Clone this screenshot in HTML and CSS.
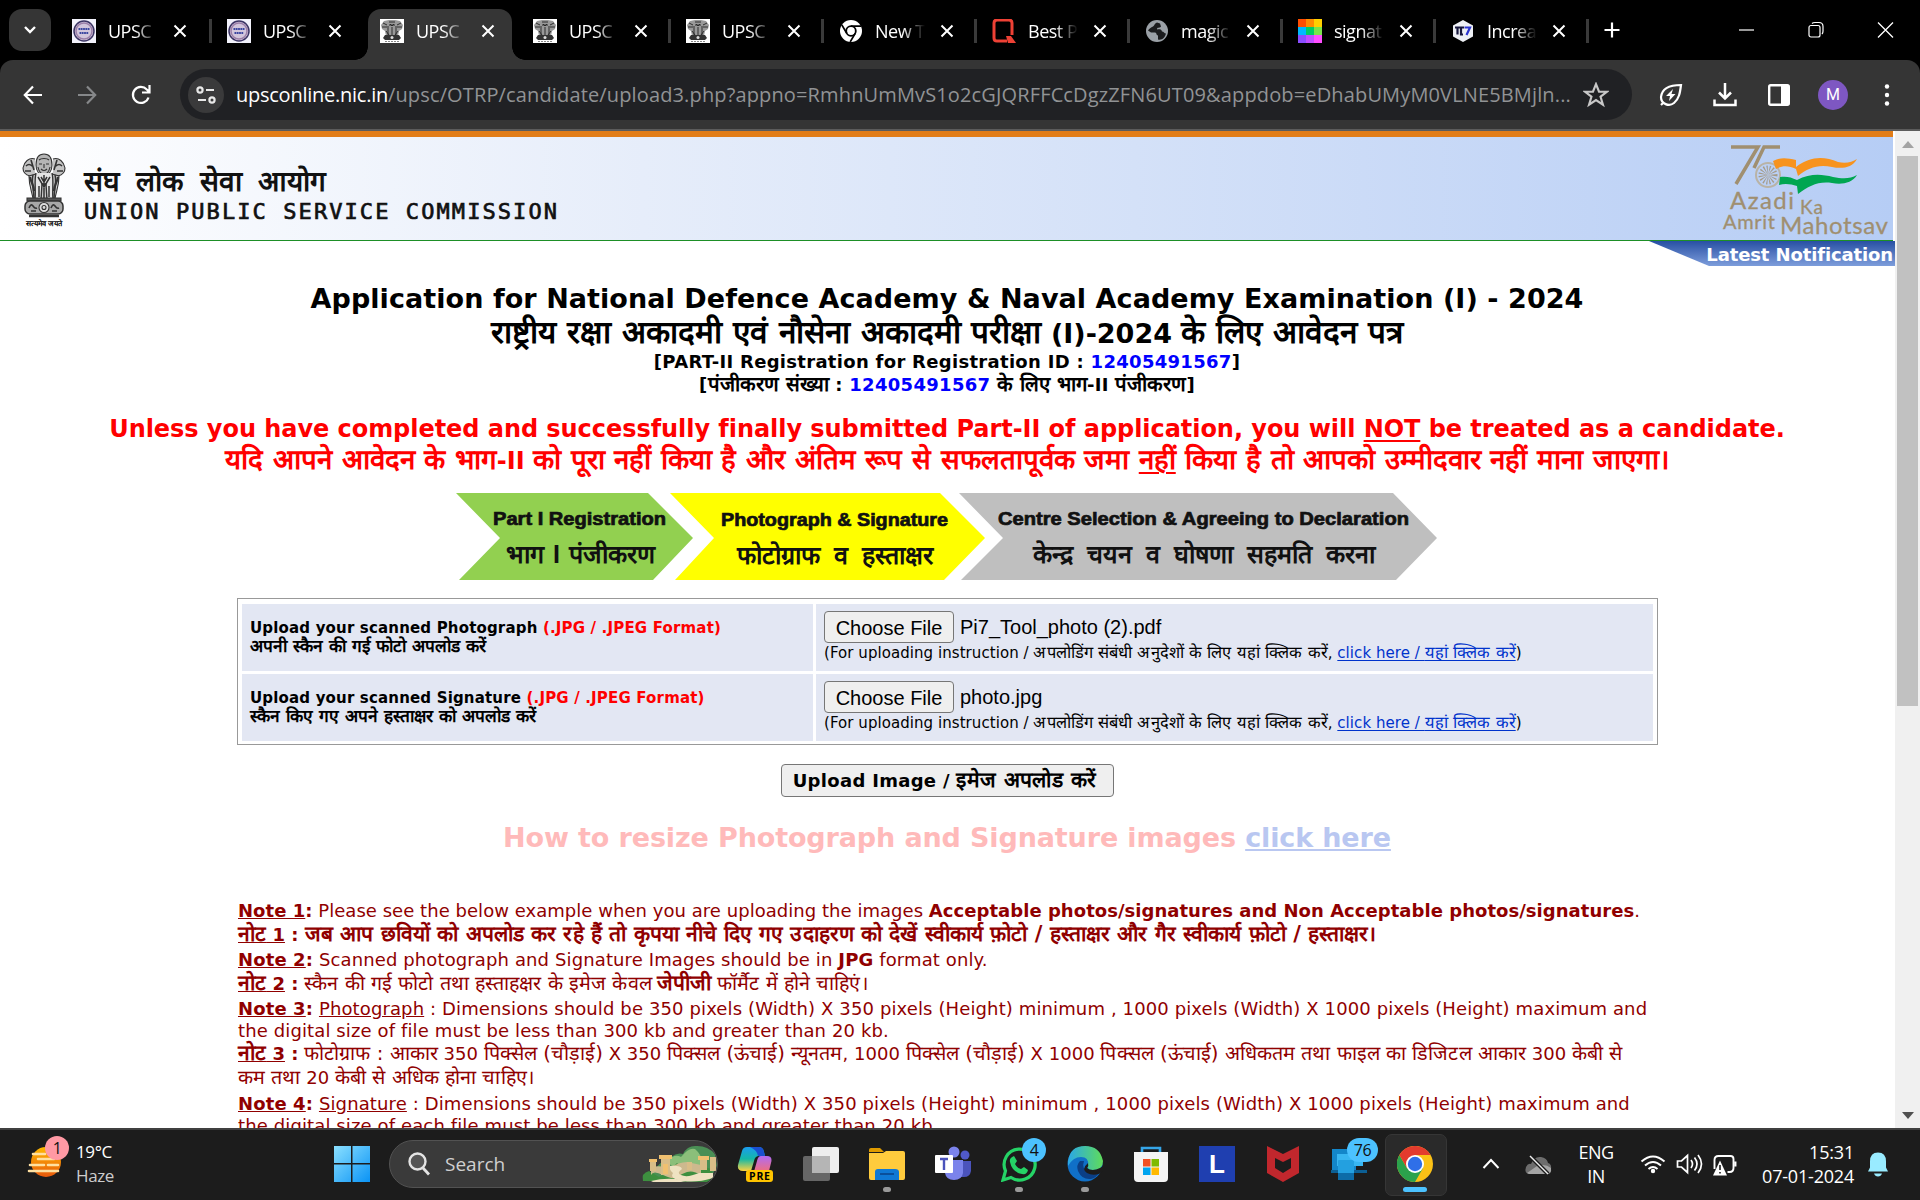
FILE: index.html
```html
<!DOCTYPE html>
<html lang="en">
<head>
<meta charset="utf-8">
<title>UPSC Online Application</title>
<link rel="stylesheet" href="styles.css">
</head>
<body>
<svg width="0" height="0" class="defs">
  <symbol id="emblem" viewBox="0 0 44 66">
    <g fill="none" stroke="#333" stroke-width="1.1">
      <path d="M14 12C14 4 17 1 22 1s8 3 8 11c0 6-3 10-8 10s-8-4-8-10Z" fill="#b5b5b5"/>
      <path d="M13 6C7 4 2 9 1 15c0 5 3 7 7 8l5-1M31 6c6-2 11 3 12 9 0 5-3 7-7 8l-5-1" fill="#c4c4c4"/>
      <path d="M17 7c2-2 8-2 10 0M17 11h3M24 11h3M19 16c2 2 4 2 6 0M22 11v4M16 14c1 5 3 7 6 7s5-2 6-7"/>
      <path d="M4 13c2-2 4-2 6 0M34 13c2-2 4-2 6 0M3 18h6M35 18h6M9 7l3 10M35 7l-3 10" stroke-width="1.6"/>
      <path d="M7 23C7 34 10 38 11 46h22c1-8 4-12 4-23l-7-2H14z" fill="#cfcfcf"/>
      <path d="M14 20c-2 8 0 14-1 27h6l1-16h4l1 16h6c-1-13 1-19-1-27" fill="#e4e4e4" stroke-width="1.4"/>
      <path d="M11 22c-2 8 1 14 1 24M33 22c2 8-1 14-1 24M16 24l3 5M28 24l-3 5M17 33v11M27 33v11M22 22v24M19 24l3 5 3-5M19 29l3 5 3-5" stroke-width="1.5"/>
      <path d="M8 24c1 6 4 8 4 14M36 24c-1 6-4 8-4 14" stroke-width="2.2"/>
      <path d="M5 45h34v3H5z" fill="#555"/>
      <rect x="3" y="48" width="38" height="13" rx="5" fill="#a8a8a8" stroke-width="1.5"/>
      <circle cx="22" cy="54.500" r="5" fill="#ddd"/><circle cx="22" cy="54.500" r="2"/>
      <path d="M7 55q2-5 4-2t4 2M29 55q2-5 4-2t4 2M9 58h5M30 58h5" stroke-width="1.6"/>
      <path d="M7 63h30" stroke-width="2.5"/>
    </g>
  </symbol>
  <symbol id="fav-emblem" viewBox="0 0 24 24">
    <path fill="#fff" d="M0 0h24v24H0z"/>
    <path fill="#999" d="M9 1h6l5 1 3 4-1 4-3 2-1 5H6l-1-5-3-2-1-4 3-4Z"/>
    <path fill="none" stroke="#222" stroke-width=".9" d="M9 3h6M9 6h6M3 4l4 2M21 4l-4 2M2 8h5M17 8h5M8 7v10M12 8v9M16 7v10M10 5l2 2 2-2M6 12l3 4M18 12l-3 4"/>
    <path fill="#333" d="M5 16h14l2 3-2 2H5l-2-2z"/><circle cx="12" cy="18.500" r="1.500" fill="#ddd"/>
    <path stroke="#888" d="M5 22.500h14" stroke-dasharray="2 1"/>
  </symbol>
  <symbol id="fav-round" viewBox="0 0 24 24">
    <path fill="#f2f2fb" d="M0 0h24v24H0z"/>
    <circle cx="12" cy="12" r="10" fill="#d2c6dc" stroke="#3b3464" stroke-width="1.500"/>
    <circle cx="12" cy="12" r="8" fill="none" stroke="#9b7fa8" stroke-width="1.500"/>
    <path stroke="#3a46a0" stroke-width="2.200" d="M6.500 10h11M7.500 14h9" stroke-dasharray="1.800 .5"/>
  </symbol>
  <symbol id="x" viewBox="0 0 14 14"><path d="M1.500 1.500l11 11M12.500 1.500l-11 11" stroke="#fff" stroke-width="2" fill="none"/></symbol>
</svg>

<header class="tabs">
  <button class="tab-menu"><svg width="14" height="10" viewBox="0 0 14 10"><path d="M2 2l5 5 5-5" fill="none" stroke="#fff" stroke-width="2.400"/></svg></button>
  <div class="tab lead"><svg class="fav"><use href="#fav-round"/></svg><span>UPSC</span><svg class="close"><use href="#x"/></svg></div>
  <div class="tab plain"><svg class="fav"><use href="#fav-round"/></svg><span>UPSC</span><svg class="close"><use href="#x"/></svg></div>
  <div class="tab active plain"><svg class="fav"><use href="#fav-emblem"/></svg><span>UPSC</span><svg class="close"><use href="#x"/></svg></div>
  <div class="tab"><svg class="fav"><use href="#fav-emblem"/></svg><span>UPSC</span><svg class="close"><use href="#x"/></svg></div>
  <div class="tab"><svg class="fav"><use href="#fav-emblem"/></svg><span>UPSC</span><svg class="close"><use href="#x"/></svg></div>
  <div class="tab"><svg class="fav" viewBox="0 0 24 24"><circle cx="12" cy="12" r="11" fill="#fff"/><circle cx="12" cy="12" r="4.800" fill="#fff" stroke="#000" stroke-width="1.800"/><path d="M12 7.200h10M7.800 14.400l-5-8.500M16.200 14.400l-5 8.500" stroke="#000" stroke-width="1.800"/></svg><span>New T</span><svg class="close"><use href="#x"/></svg></div>
  <div class="tab"><svg class="fav" viewBox="0 0 24 24"><path d="M15 22H5q-3 0-3-3V4q0-3 3-3h12q3 0 3 3v12" fill="none" stroke="#ee4135" stroke-width="3"/><path d="M14 17h5l5 7h-8z" fill="#ee4135"/></svg><span>Best P</span><svg class="close"><use href="#x"/></svg></div>
  <div class="tab"><svg class="fav" viewBox="0 0 24 24"><circle cx="12" cy="12" r="11" fill="#9aa0a6"/><path d="M12 3.500c-3 1-2 3-4 4-2 1-4 2-5 4l3 2h4c2 0 1 3 3 3v4c4 1 7-2 8-6-2 0-2-2-4-2-1-3-3-2-5-2 0-3 3-1 4-3l-1-3z" fill="#1b1c1e"/></svg><span>magic</span><svg class="close"><use href="#x"/></svg></div>
  <div class="tab"><svg class="fav" viewBox="0 0 24 24"><path fill="#ff4d00" d="M0 0h8v8H0z"/><path fill="#ff8c00" d="M8 0h8v8H8z"/><path fill="#ffd000" d="M16 0h8v8h-8z"/><path fill="#00b8ff" d="M0 8h8v8H0z"/><path fill="#00cc66" d="M8 8h8v8H8z"/><path fill="#7be34a" d="M16 8h8v8h-8z"/><path fill="#8a4dff" d="M0 16h8v8H0z"/><path fill="#c04dff" d="M8 16h8v8H8z"/><path fill="#ff4dff" d="M16 16h8v8h-8z"/></svg><span>signat</span><svg class="close"><use href="#x"/></svg></div>
  <div class="tab"><svg class="fav" viewBox="0 0 24 24"><path d="M12 1l10 5.500v11L12 23 2 17.500v-11z" fill="#eef0f5"/><path d="M4 8.500h9M6.500 8.500v7M10 8.500v7h2" stroke="#16163c" stroke-width="2.200" fill="none"/><path d="M13.500 8.500H19l-3.500 7.500" stroke="#2c35d0" stroke-width="2.200" fill="none"/></svg><span>Increa</span><svg class="close"><use href="#x"/></svg></div>
  <svg class="new-tab" viewBox="0 0 16 16"><path d="M8 .5v15M.5 8h15" stroke="#fff" stroke-width="2.200"/></svg>
  <div class="window-buttons">
    <svg width="18" height="18" viewBox="0 0 18 18"><path d="M1 9h15" stroke="#fff" stroke-width="1.200"/></svg>
    <svg width="18" height="18" viewBox="0 0 18 18"><rect x="2" y="4.500" width="11" height="11.500" rx="2" fill="none" stroke="#fff" stroke-width="1.200"/><path d="M5 2.500Q6 1.500 8 1.500h4q4 0 4 4V10q0 2-1 3" fill="none" stroke="#fff" stroke-width="1.200"/></svg>
    <svg width="18" height="18" viewBox="0 0 18 18"><path d="M2 1.500l15 15M17 1.500l-15 15" stroke="#fff" stroke-width="1.300"/></svg>
  </div>
</header>

<nav class="toolbar">
  <svg class="nav-icon" viewBox="0 0 20 20"><path d="M19 10H2M10 1.500L1.800 10l8.200 8.500" fill="none" stroke="#fff" stroke-width="2.200"/></svg>
  <svg class="nav-icon" viewBox="0 0 20 20"><path d="M1 10h17M10 1.500l8.200 8.500-8.200 8.500" fill="none" stroke="#86888a" stroke-width="2.200"/></svg>
  <svg class="nav-icon" viewBox="0 0 20 20"><path d="M17.500 12.500A8 8 0 1 1 15.800 4.500l2 2M18.500 0v7.500H11" fill="none" stroke="#fff" stroke-width="2.200"/></svg>
  <div class="omnibox">
    <span class="site"><svg width="20" height="18" viewBox="0 0 20 18"><g fill="none" stroke="#e8e8e8" stroke-width="2.200"><circle cx="4" cy="4" r="2.600"/><path d="M10 4h8M2 14h8"/><circle cx="16" cy="14" r="2.600"/></g></svg></span>
    <span class="url"><b>upsconline.nic.in</b>/upsc/OTRP/candidate/upload3.php?appno=RmhnUmMvS1o2cGJQRFFCcDgzZFN6UT09&amp;appdob=eDhabUMyM0VLNE5BMjln...</span>
    <svg class="star" viewBox="0 0 24 24"><path d="M12 2l2.800 7h7.200l-5.800 4.600 2.200 7.400L12 16.700 5.600 21l2.200-7.400L2 9h7.200z" fill="none" stroke="#c7c7c7" stroke-width="2"/></svg>
  </div>
  <svg class="tool" viewBox="0 0 24 24"><path d="M22 2C12 2 3 5 2 14c0 7 8 10 13 6 5-4 6-10 7-18ZM2 22l3-3" fill="none" stroke="#fff" stroke-width="2.200"/><path d="M14 6l-7 7h4l-1 5 6.500-7h-4z" fill="#fff"/></svg>
  <svg class="tool" viewBox="0 0 24 24"><path d="M12 0v15M6 9.500l6 6 6-6M1.500 16.500v5.500h21v-5.500" fill="none" stroke="#fff" stroke-width="2.500"/></svg>
  <svg class="tool" viewBox="0 0 24 24"><rect x="2.200" y="2.200" width="19.600" height="19.600" rx="1.500" fill="none" stroke="#fff" stroke-width="2.400"/><path d="M14 2h8v20h-8z" fill="#fff"/></svg>
  <span class="avatar">M</span>
  <svg class="dots" viewBox="0 0 6 22"><circle cx="3" cy="2.500" r="2.200" fill="#fff"/><circle cx="3" cy="11" r="2.200" fill="#fff"/><circle cx="3" cy="19.500" r="2.200" fill="#fff"/></svg>
</nav>

<div class="viewport">
<main class="page">
  <div class="banner">
    <div class="crest"><svg width="44" height="66"><use href="#emblem"/></svg><span>सत्यमेव जयते</span></div>
    <div class="org"><div class="org-hi">संघ लोक सेवा आयोग</div><div class="org-en">UNION PUBLIC SERVICE COMMISSION</div></div>
    <svg class="azadi" width="172" height="98" viewBox="1721 141 172 98">
      <path d="M1731 147h27l-22 37M1780 147h-16l-10 21" fill="none" stroke="#a08f70" stroke-width="3.500"/>
      <circle cx="1768" cy="175" r="12" fill="none" stroke="#b9b3a6" stroke-width="2"/>
      <circle cx="1768" cy="175" r="5" fill="none" stroke="#a59b88" stroke-width="9" stroke-dasharray=".8 1.200"/>
      <path d="M1773 161c8-4 14-3 23-1v7c14-11 28-11 42-5 8 2 14 0 19-3-5 9-15 10-25 8-14-3-24 1-34 9l-2-7c-7-3-13-4-20 0z" fill="#f7931e"/>
      <path d="M1780 177c6-1 11 0 17 3 13-7 25-6 36-3 10 2 17 2 24-2-5 8-15 10-25 8-14-2-23 3-34 11l-1-8c-6-2-12-3-18-1z" fill="#00a651"/>
      <g fill="#a08f70" font-family="Lato, sans-serif" stroke="#a08f70" stroke-width=".3">
        <text x="1730" y="209" font-size="24" textLength="64">Azadi</text>
        <text x="1800" y="214" font-size="19" textLength="23">Ka</text>
        <text x="1723" y="229" font-size="20" textLength="52">Amrit</text>
        <text x="1780" y="234" font-size="24" textLength="108">Mahotsav</text>
      </g>
    </svg>
  </div>
  <div class="latest"><span>Latest Notification</span></div>

  <section class="titles">
    <div class="t1">Application for National Defence Academy &amp; Naval Academy Examination (I) - 2024</div>
    <div class="t2"><span class="h">राष्ट्रीय रक्षा अकादमी एवं नौसेना अकादमी परीक्षा</span> (I)-2024 <span class="h">के लिए आवेदन पत्र</span></div>
    <div class="t3">[PART-II Registration for Registration ID : <em>12405491567</em>]</div>
    <div class="t3">[<span class="h">पंजीकरण संख्या</span> : <em>12405491567</em> <span class="h">के लिए भाग</span>-II <span class="h">पंजीकरण</span>]</div>
  </section>
  <section class="warning">
    <div class="w-en">Unless you have completed and successfully finally submitted Part-II of application, you will <u>NOT</u> be treated as a candidate.</div>
    <div class="w-hi"><span class="h">यदि आपने आवेदन के भाग</span>-II <span class="h">को पूरा नहीं किया है और अंतिम रूप से सफलतापूर्वक जमा <u>नहीं</u> किया है तो आपको उम्मीदवार नहीं माना जाएगा।</span></div>
  </section>

  <svg class="steps" width="982" height="87" viewBox="456 493 982 87">
    <path d="M456 493h192l45 45-40 42H459l41-42z" fill="#92d050"/>
    <path d="M670 493h270l45 45-41 42H675l39-42z" fill="#ff0"/>
    <path d="M959 493h434l44 45-41 42H961l42-42z" fill="#bfbfbf"/>
    <g font-family="'Liberation Sans', sans-serif" font-weight="bold" fill="#111">
      <g font-size="18" stroke="#111" stroke-width=".7">
        <text x="493" y="525" textLength="173" lengthAdjust="spacingAndGlyphs">Part I Registration</text>
        <text x="721" y="526" textLength="227" lengthAdjust="spacingAndGlyphs">Photograph &amp; Signature</text>
        <text x="998" y="525" textLength="411" lengthAdjust="spacingAndGlyphs">Centre Selection &amp; Agreeing to Declaration</text>
      </g>
      <g font-size="25">
        <text x="506" y="563" word-spacing="2">भाग I पंजीकरण</text>
        <text x="737" y="564" word-spacing="7">फोटोग्राफ व हस्ताक्षर</text>
        <text x="1033" y="563" word-spacing="7">केन्द्र चयन व घोषणा सहमति करना</text>
      </g>
    </g>
  </svg>

  <div class="upload">
    <div class="label"><div class="l-photo">Upload your scanned Photograph <i>(.JPG / .JPEG Format)</i></div><div><span class="h">अपनी स्कैन की गई फोटो अपलोड करें</span></div></div>
    <div class="field"><div class="file"><button>Choose File</button>Pi7_Tool_photo (2).pdf</div><div class="hint">(For uploading instruction / <span class="h">अपलोडिंग संबंधी अनुदेशों के लिए यहां क्लिक करें</span>, <a>click here / <span class="h">यहां क्लिक करें</span></a>)</div></div>
    <div class="label"><div class="l-photo">Upload your scanned Signature <i>(.JPG / .JPEG Format)</i></div><div><span class="h">स्कैन किए गए अपने हस्ताक्षर को अपलोड करें</span></div></div>
    <div class="field"><div class="file"><button>Choose File</button>photo.jpg</div><div class="hint">(For uploading instruction / <span class="h">अपलोडिंग संबंधी अनुदेशों के लिए यहां क्लिक करें</span>, <a>click here / <span class="h">यहां क्लिक करें</span></a>)</div></div>
  </div>
  <button class="submit">Upload Image / <span class="h">इमेज अपलोड करें</span></button>
  <div class="resize">How to resize Photograph and Signature images <a>click here</a></div>

  <section class="notes">
    <p><b><u>Note 1</u>:</b> Please see the below example when you are uploading the images <b>Acceptable photos/signatures and Non Acceptable photos/signatures</b>.</p>
    <p class="hi"><b><u><span class="h">नोट</span> 1</u> : <span class="h">जब आप छवियों को अपलोड कर रहे हैं तो कृपया नीचे दिए गए उदाहरण को देखें स्वीकार्य फ़ोटो / हस्ताक्षर और गैर स्वीकार्य फ़ोटो / हस्ताक्षर।</span></b></p>
    <p class="wide"><b><u>Note 2</u>:</b> Scanned photograph and Signature Images should be in <b>JPG</b> format only.</p>
    <p class="hi"><b><u><span class="h">नोट</span> 2</u> :</b> <span class="h">स्कैन की गई फोटो तथा हस्ताहक्षर के इमेज केवल</span> <b><span class="h">जेपीजी</span></b> <span class="h">फॉर्मैट में होने चाहिएं।</span></p>
    <p class="wide"><b><u>Note 3</u>:</b> <u>Photograph</u> : Dimensions should be 350 pixels (Width) X 350 pixels (Height) minimum , 1000 pixels (Width) X 1000 pixels (Height) maximum and<br>the digital size of file must be less than 300 kb and greater than 20 kb.</p>
    <p class="hi last"><b><u><span class="h">नोट</span> 3</u> :</b> <span class="h">फोटोग्राफ : आकार</span> 350 <span class="h">पिक्सेल (चौड़ाई)</span> X 350 <span class="h">पिक्सल (ऊंचाई) न्यूनतम</span>, 1000 <span class="h">पिक्सेल (चौड़ाई)</span> X 1000 <span class="h">पिक्सल (ऊंचाई) अधिकतम तथा फाइल का डिजिटल आकार</span> 300 <span class="h">केबी से</span><br><span class="h">कम तथा</span> 20 <span class="h">केबी से अधिक होना चाहिए।</span></p>
    <p class="wide"><b><u>Note 4</u>:</b> <u>Signature</u> : Dimensions should be 350 pixels (Width) X 350 pixels (Height) minimum , 1000 pixels (Width) X 1000 pixels (Height) maximum and<br>the digital size of each file must be less than 300 kb and greater than 20 kb.</p>
  </section>
</main>
<aside class="scrollbar">
  <svg width="12" height="7" viewBox="0 0 12 7"><path d="M6 0l6 7H0z" fill="#a3a3a3"/></svg>
  <div class="thumb"></div>
  <svg width="12" height="7" viewBox="0 0 12 7"><path d="M0 0h12L6 7z" fill="#505050"/></svg>
</aside>
</div>

<footer class="taskbar">
  <div class="weather">
    <svg width="40" height="40" viewBox="0 0 40 40"><defs><linearGradient id="sun" x2="0" y2="1"><stop stop-color="#ffb900"/><stop offset="1" stop-color="#e8590c"/></linearGradient></defs><circle cx="22" cy="22" r="15" fill="url(#sun)"/><path d="M9 14h12M14 19h16M6 25h14M24 25h10M5 31h29" stroke="#ffe0a0" stroke-width="2.600" stroke-linecap="round"/></svg>
    <span class="badge pink">1</span>
    <div><div>19°C</div><div class="dim">Haze</div></div>
  </div>
  <svg class="start" width="36" height="36" viewBox="0 0 36 36"><defs><linearGradient id="win" x2="1" y2="1"><stop stop-color="#8be0ff"/><stop offset="1" stop-color="#0a93f5"/></linearGradient></defs><path d="M0 0h17v17H0zM18.500 0H36v17H18.500zM0 18.500h17V36H0zM18.500 18.500H36V36H18.500z" fill="url(#win)"/></svg>
  <div class="search">
    <svg width="24" height="24" viewBox="0 0 24 24"><circle cx="10.500" cy="9.500" r="8" fill="#555" stroke="#e4e4e4" stroke-width="2.400"/><path d="M16 16l6 6.500" stroke="#e4e4e4" stroke-width="2.800"/></svg>
    <span>Search</span>
    <svg width="76" height="38" viewBox="0 0 76 38"><path d="M8 36Q14 18 30 12q6-5 12-3 4-8 12-8 12-1 20 8l2 12-8 15z" fill="#4a8f55"/><path d="M26 16q8-8 14-4 8-10 14-8 6 5 8 14-10 8-20 6-10 0-16-8z" fill="#8bbf7a"/><path d="M2 36q-2-8 6-10l10 6 10-6 8-8 6 6 16-4 12 4 2 8-6 5z" fill="#3d8f3f"/><path d="M10 22q10-2 18 1 10-6 18-6l14 3v10q-8-5-14-3t-10 5-14-2-12 0z" fill="#cdb98e"/><path d="M28 21q12-1 13 3-6 4-1 6 6 3 18-2h14v5q-16 5-30 3t-10-8q-3-2-4-7z" fill="#efe2c2"/><path d="M9 16h6v10H9zM20 13h9v17h-9zM59 14h7v11h-7zM46 17h5v8h-5zM69 12h6v14h-6z" fill="#d9bd87"/><path d="M8 14h8v3H8zM18 10h13v4H18zM57 11h11v4H57zM62 3l1 8M22 19h5v10h-5z" fill="#f0c070"/><path d="M10 36q12-3 24-2l16 1-10 2H12z" fill="#efe2c2"/></svg>
  </div>
  <div class="app first"><svg width="36" height="38" viewBox="0 0 36 38"><defs><linearGradient id="cp" x2="0" y2="1"><stop stop-color="#1b9cf0"/><stop offset=".5" stop-color="#14b8a6"/><stop offset="1" stop-color="#ffd23f"/></linearGradient><linearGradient id="cq" x2="0" y2="1"><stop stop-color="#b06bf5"/><stop offset="1" stop-color="#ff6f61"/></linearGradient></defs><path d="M10 2h12q4 0 5 5l1 4h-6q-4 0-5 5l-3 10H6q-6 0-5-6L5 6q1-4 5-4z" fill="url(#cp)"/><path d="M13 2h9q4 0 5 5l1 4h-7q-1-6-8-9z" fill="#1a4fd0"/><path d="M24 11h6q6 0 4 7l-2 8q-1 4-5 4H16l4-14q1-5 4-5z" fill="url(#cq)"/><rect x="9" y="25" width="27" height="12" rx="3" fill="#ffc400"/><text x="12" y="35" font-family="Open Sans, sans-serif" font-size="10.500" font-weight="bold" textLength="21">PRE</text></svg></div>
  <div class="app"><svg width="36" height="36" viewBox="0 0 36 36"><rect x="0" y="10" width="27" height="25" rx="2" fill="#666"/><rect x="9" y="1" width="27" height="26" rx="2" fill="#eee"/><path d="M9 10h18v17H9z" fill="#b5b5b5"/></svg></div>
  <div class="app on"><svg width="36" height="36" viewBox="0 0 36 36"><path d="M0 4q0-2 2-2h9l4 4H0z" fill="#e09b00"/><path d="M0 7h14l3-2h17q2 0 2 2v25q0 2-2 2H2q-2 0-2-2z" fill="#ffcb3d"/><path d="M6 34V26q0-3 3-3h17q4 0 4 3v8z" fill="#0f78d4"/><path d="M11 28h14" stroke="#0a4f9a" stroke-width="2"/></svg></div>
  <div class="app"><svg width="36" height="36" viewBox="0 0 36 36"><circle cx="30" cy="9" r="4.500" fill="#5059c9"/><path d="M24 15h12v10q-1 6-7 6h-5z" fill="#4b53bc"/><circle cx="19" cy="6" r="5.500" fill="#7b83eb"/><path d="M10 14h18v13q-1 7-9 7t-9-7z" fill="#7b83eb"/><rect x="0" y="9" width="18" height="18" rx="1" fill="#fff"/><path d="M5 13h8M9 13v11" stroke="#4b53bc" stroke-width="2.400"/></svg></div>
  <div class="app on"><svg width="36" height="36" viewBox="0 0 36 36"><path d="M2 34l2.500-9A15.500 15.500 0 1 1 10 31.500z" fill="#1c1c1c" stroke="#25d366" stroke-width="3.200"/><path d="M13 10l3 5-2 3q2 4 6 5l3-2 4 3q-1 5-6 4-10-2-12-12-1-4 4-6z" fill="#25d366"/></svg><span class="badge blue">4</span></div>
  <div class="app on"><svg width="36" height="36" viewBox="0 0 36 36"><defs><linearGradient id="eg"><stop stop-color="#2aa7e8"/><stop offset="1" stop-color="#5fdc5a"/></linearGradient></defs><circle cx="18" cy="18" r="17.500" fill="#1070c8"/><path d="M1 15Q3 0 18 0t18 15q0 9-10 9-7 0-5-5 1-8-7-8T1 20z" fill="url(#eg)"/><path d="M13 15q-4 4-2 10 4 9 13 8 5-1 8-6-5 2-10 0-8-4-5-12z" fill="#0b3f86"/><path d="M21 17q1 3-1 5 5 4 13 0l3-2v5l-4 3q-7 2-12-1-6-4 1-10z" fill="#1c1c1c"/></svg></div>
  <div class="app"><svg width="36" height="38" viewBox="0 0 36 38"><path d="M9 9V3h18v6" fill="none" stroke="#35a5e8" stroke-width="2.600"/><path d="M1 7h34v26q0 4-4 4H5q-4 0-4-4z" fill="#f4f4f4"/><path fill="#f25022" d="M10 14h7.500v7.500H10z"/><path fill="#7fba00" d="M18.500 14H26v7.500h-7.500z"/><path fill="#00a4ef" d="M10 22.500h7.500V30H10z"/><path fill="#ffb900" d="M18.500 22.500H26V30h-7.500z"/></svg></div>
  <div class="app"><span class="lsq">L</span></div>
  <div class="app"><svg width="34" height="36" viewBox="0 0 34 36"><path d="M1 0l16 8 16-8v27L17 36 1 27zM9 12v10l8 5 8-5V12l-8 4z" fill="#c1272d" fill-rule="evenodd"/></svg></div>
  <div class="app"><svg width="36" height="36" viewBox="0 0 36 36"><rect x="1" y="3" width="24" height="24" fill="#1386c9"/><rect x="6" y="8" width="26" height="12" fill="#38b6f1"/><path d="M0 24h36v3H0z" fill="#0c5f94"/><rect x="7" y="14" width="16" height="20" rx="1" fill="#23a0e0"/><path d="M7 27h16v7H7z" fill="#0d6ca8"/></svg><span class="badge blue wide-badge">76</span></div>
  <div class="app current"><svg width="36" height="36" viewBox="0 0 36 36"><circle cx="18" cy="18" r="18" fill="#fbc116"/><path d="M2.400 9A18 18 0 0 0 18 36l7.800-13.500L18 18l-7.800 4.500z" fill="#2ba24c"/><path d="M2.400 9l7.800 13.500L18 9H33.600A18 18 0 0 0 2.400 9z" fill="#e33b2e"/><circle cx="18" cy="18" r="9" fill="#fff"/><circle cx="18" cy="18" r="7.200" fill="#2f6fe8"/></svg></div>
  <div class="tray">
    <svg class="chev" viewBox="0 0 36 36"><path d="M10.500 22l7.500-8 7.500 8" fill="none" stroke="#fff" stroke-width="2"/></svg>
    <svg class="cloud" viewBox="0 0 48 36"><path d="M14 28q-5-1-3-7 2-4 5-3 3-8 10-7 6 1 7 6 4 1 3 7 0 4-4 4z" fill="#6d6d6d"/><path d="M12 27l10-7q8-3 14 2 1 6-5 6H14z" fill="#a5a5a5"/><path d="M15 10l18 18" stroke="#1c1c1c" stroke-width="4"/><path d="M15 10l18 18" stroke="#eee" stroke-width="1.500"/></svg>
    <div class="lang">ENG<br>IN</div>
    <svg viewBox="0 0 36 36"><g fill="none" stroke="#fff" stroke-width="2"><path d="M6.500 15.500q11.500-10 23 0M10 19.500q8-7 16 0M13.500 23q4.500-4 9 0"/></g><circle cx="18" cy="25" r="2.200" fill="#fff"/></svg>
    <svg viewBox="0 0 36 36"><path d="M6.500 15h4l6-5.500v17l-6-5.500h-4z" fill="none" stroke="#fff" stroke-width="1.700"/><path d="M20 14q3 4 0 8M23.500 11.500q5 6.500 0 13M27 9q7 9 0 18" fill="none" stroke="#fff" stroke-width="1.700"/></svg>
    <svg viewBox="0 0 36 36"><path d="M7.500 23V14q0-4 4-4h12q3 0 3 3v9q0 4-4 4h-2M28.500 15.500v5" fill="none" stroke="#fff" stroke-width="1.900"/><path d="M13 14.500l7 15H6z" fill="#fff"/><path d="M13 19v5M13 26v1.600" stroke="#1c1c1c" stroke-width="1.600"/></svg>
    <div class="clock">15:31<br>07-01-2024</div>
    <svg class="bell" viewBox="0 0 36 36"><path d="M18 6.500q8 0 8 9v6l2 4H8l2-4v-6q0-9 8-9zM14 27.500h8q-1 3-4 3t-4-3z" fill="#99ebff"/></svg>
  </div>
</footer>
</body>
</html>
```
FILE: styles.css
```css
* { box-sizing: border-box; }
body {
  margin: 0;
  width: 1920px;
  height: 1200px;
  overflow: hidden;
  display: flex;
  flex-direction: column;
  background: #000;
  font-family: "Open Sans", sans-serif;
  white-space: nowrap;
}
button { font: inherit; padding: 0; }
.defs { position: absolute; }

/* tab strip */
.tabs { height: 60px; flex: none; display: flex; align-items: flex-start; padding: 9px 0 0 9px; }
.tab-menu {
  width: 42px; height: 42px; border: 0; border-radius: 13px; background: #353535;
  display: flex; align-items: center; justify-content: center; margin-right: 11px;
}
.tab {
  position: relative; width: 144px; height: 33px; margin-right: 9px;
  display: flex; align-items: center; padding-left: 12px; margin-top: 5px;
}
.tab.lead { padding-left: 10px; }
.tab::after {
  content: ""; position: absolute; right: -6px; top: 5px; width: 3px; height: 24px; background: #3a3a3a;
}
.tab.plain::after { display: none; }
.fav { width: 24px; height: 24px; flex: none; }
.tab span {
  width: 52px; margin-left: 12px; font-size: 18px; letter-spacing: -.5px; color: #fff;
  -webkit-mask-image: linear-gradient(90deg, #000 52%, transparent 96%);
  mask-image: linear-gradient(90deg, #000 52%, transparent 96%);
}
.close { width: 14px; height: 14px; margin-left: 13px; flex: none; }
.tab.active { height: 51px; margin-top: 0; padding-bottom: 8px; background: #353535; border-radius: 13px 13px 0 0; }
.tab.active::before, .tab.active::after {
  content: ""; display: block; position: absolute; bottom: 0; width: 13px; height: 13px; top: auto; background: none;
}
.tab.active::before { left: -13px; background: radial-gradient(circle at 0 0, transparent 12.500px, #353535 13px); }
.tab.active::after { right: -13px; background: radial-gradient(circle at 100% 0, transparent 12.500px, #353535 13px); }
.new-tab { width: 16px; height: 16px; margin: 13px 0 0 12px; }
.window-buttons { margin: 12px 26px 0 auto; display: flex; gap: 51px; }

/* toolbar */
.toolbar {
  height: 71px; flex: none; background: #353535; border-bottom: 2px solid #5c5c5c; border-radius: 13px 13px 0 0;
  display: flex; align-items: center; padding: 0 0 0 23px;
}
.nav-icon { width: 20px; height: 20px; margin-right: 34px; }
.omnibox {
  width: 1452px; height: 51px; margin-left: -5px; border-radius: 26px; background: #202124;
  display: flex; align-items: center; padding-left: 8px;
}
.site { width: 36px; height: 36px; border-radius: 50%; background: #3a3a3b; display: flex; align-items: center; justify-content: center; }
.url { width: 1340px; margin-left: 12px; font-size: 20px; color: #919395; letter-spacing: .14px; }
.url b { font-weight: 400; color: #fff; letter-spacing: -.25px; }
.star { width: 26px; height: 26px; margin-left: 7px; }
.tool { width: 24px; height: 24px; margin-left: 27px; margin-right: 3px; }
.avatar {
  width: 30px; height: 30px; margin-left: 24px; border-radius: 50%; background: #7e57c2; color: #fff;
  font: 16px/30px Roboto, sans-serif; text-align: center;
}
.dots { width: 6px; height: 22px; margin-left: 36px; }

/* page viewport */
.viewport { height: 997px; flex: none; display: flex; background: #fff; overflow: hidden; }
.page {
  width: 1895px; height: 997px; overflow: hidden; background: #fff;
  display: flex; flex-direction: column; align-items: flex-start;
  font-family: "DejaVu Sans", sans-serif;
}
.scrollbar { width: 25px; background: #f0f0f0; display: flex; flex-direction: column; align-items: center; padding: 10px 0 9px; }
.scrollbar .thumb { width: 21px; height: 550px; margin: 8px 0 auto; background: #c1c1c1; }

.banner {
  width: 1893px; height: 110px; flex: none; display: flex; border-top: 6px solid #e27d18; border-bottom: 1px solid #1d8f26;
  background: linear-gradient(90deg, #fff 0, #e6edfa 34%, #d4e1f8 60%, #b6cdf5 100%);
}
.crest { width: 44px; margin: 16px 0 0 22px; display: flex; flex-direction: column; align-items: center; }
.crest svg { flex: none; }
.crest span { font-size: 7.500px; line-height: 10px; font-weight: bold; }
.org { margin: 27px 0 0 18px; color: #111; }
.org-hi { font: bold 28px/36px "DejaVu Sans", sans-serif; word-spacing: 6.400px; }
.org-en { font: 22px/24px "DejaVu Sans Mono", monospace; letter-spacing: 2.080px; -webkit-text-stroke: .7px #111; }
.azadi { margin: 4px 0 0 auto; }
.latest {
  align-self: flex-end; width: 246px; height: 25px; flex: none; padding-right: 2px; text-align: right;
  background: linear-gradient(#2850a4, #7d9ddb); clip-path: polygon(0 0, 100% 0, 100% 100%, 60px 100%);
  color: #fff; font-weight: bold; font-size: 18px; line-height: 27px; letter-spacing: -.120px;
}

/* Devanagari runs are set larger than the Latin around them */
.h { font-size: 1.095em; line-height: 0; }
b .h, .titles .h, .submit .h { font-size: 1.167em; }
.warning .h { font-size: 1.152em; }
.label .h { font-size: 1.150em; }

.titles, .warning { width: 1894px; text-align: center; font-weight: bold; }
.titles { margin-top: 15px; color: #000; }
.t1 { font-size: 27px; line-height: 35px; letter-spacing: .06px; }
.t2 { font-size: 27px; line-height: 35px; }
.t3 { font-size: 18px; line-height: 22.500px; letter-spacing: .3px; }
.t3 .h { font-size: 1.130em; letter-spacing: 0; }
.t3 em { font-style: normal; color: #00f; }
.warning { margin-top: 17px; color: #f00; line-height: 32px; font-size: 24px; }
.warning u { text-underline-offset: 3px; text-decoration-thickness: 2px; }
.w-en { letter-spacing: -.05px; }

.steps { margin: 16px 0 0 456px; flex: none; }

.upload {
  margin: 18px 0 0 237px; width: 1421px; border: 1px solid #999; padding: 5px 4px 3px 4px; flex: none;
  display: grid; grid-template-columns: 571px 837px; grid-template-rows: 67px 67px; gap: 3px;
}
.label, .field { background: #e3e7f3; }
.label { padding: 15px 0 0 8px; font-size: 15px; font-weight: bold; line-height: 18.500px; }
.l-photo { letter-spacing: .170px; }
.label i { font-style: normal; color: #f00; }
.field { padding: 7px 0 0 8px; }
.file { font: 20px/32px "Liberation Sans", sans-serif; display: flex; }
.file button { width: 130px; height: 32px; margin-right: 6px; border: 1px solid #767676; border-radius: 4px; background: #efefef; }
.hint { font-size: 15px; line-height: 21px; letter-spacing: .06px; }
.hint a { color: #0033cc; text-decoration: underline; text-underline-offset: 2px; }
.submit {
  margin: 19px 0 0 781px; width: 333px; height: 33px; flex: none; border: 1px solid #767676; border-radius: 4px; background: #efefef;
  font-size: 18px; font-weight: bold; line-height: 31px; letter-spacing: .3px; padding-right: 6px;
}
.resize { width: 1894px; margin-top: 23px; text-align: center; font-size: 27px; font-weight: bold; line-height: 35px; letter-spacing: -.130px; color: #ffbaba; }
.resize a { color: #b9c7f1; text-decoration: underline; }

.notes { margin: 45px 0 0 238px; width: 1440px; color: #900000; font-size: 18px; line-height: 22px; }
.notes p { margin: 0; letter-spacing: .04px; }
.notes p.hi { line-height: 25px; margin-bottom: 2px; }
.notes p.hi.last { line-height: 24px; margin-bottom: 3px; }
.notes p.wide { letter-spacing: .120px; }

/* taskbar */
.taskbar { height: 72px; flex: none; background: #1c1c1c; border-top: 2px solid #404040; padding-bottom: 2px; display: flex; align-items: center; color: #fff; }
.weather { position: relative; width: 304px; padding-left: 24px; display: flex; gap: 12px; font-size: 17px; line-height: 24px; letter-spacing: -.4px; }
.weather .dim { color: #ccc; }
.badge {
  position: absolute; min-width: 24px; height: 24px; border-radius: 12px; color: #111; text-align: center;
  font-size: 16px; line-height: 24px; letter-spacing: -.5px;
}
.pink { background: #ff99a4; left: 45px; top: -4px; }
.blue { background: #4cc2ff; }
.app .blue { right: 6px; top: 9px; }
.app .wide-badge { right: 4px; width: 31px; }
.start { margin-left: 30px; }
.search {
  width: 329px; height: 48px; margin-left: 19px; border-radius: 24px; border: 1px solid #525252; background: #3a3a3a;
  display: flex; align-items: center; padding-left: 17px; overflow: hidden; font-size: 19px; color: #d0d0d0;
}
.search span { width: 196px; margin-left: 14px; }
.app { position: relative; width: 66px; height: 70px; display: flex; align-items: center; justify-content: center; }
.first { margin-left: 4px; }
.on::after, .current::after {
  content: ""; position: absolute; left: 29px; bottom: 7px; width: 8px; height: 5px; border-radius: 3px; background: #9a9a9a;
}
.current::after { left: 21px; width: 24px; background: #4cc2ff; }
.current::before {
  content: ""; position: absolute; left: 3px; top: 5px; width: 60px; height: 60px; border-radius: 7px; border: 1px solid #363636; background: #2a2a2a;
}
.current svg { position: relative; }
.lsq { width: 36px; height: 36px; background: #1f3fb0; color: #fff; font: bold 26px/36px "Liberation Sans", sans-serif; text-align: center; }
.tray { display: flex; align-items: center; margin-left: 25px; font-size: 18px; line-height: 24px; letter-spacing: -.2px; }
.tray svg { width: 36px; height: 36px; }
.tray .cloud { width: 48px; margin-left: 6px; }
.lang { width: 60px; margin: 0 9px 0 3px; text-align: center; letter-spacing: -.5px; }
.clock { width: 111px; text-align: right; }
.tray .bell { margin-left: 6px; }
```
